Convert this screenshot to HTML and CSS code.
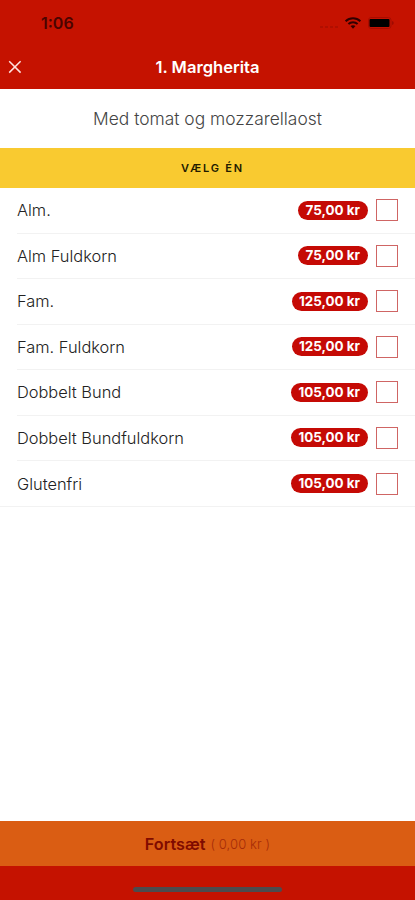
FILE: index.html
```html
<!DOCTYPE html>
<html lang="da">
<head>
    <meta charset="UTF-8">
    <meta name="viewport" content="width=device-width, initial-scale=1.0">
    <title>1. Margherita</title>
    <link rel="stylesheet" href="styles.css">
</head>
<body>
    <div class="screen">
        <header class="header">
            <div class="status-bar">
                <span class="time">1:06</span>
                <div class="status-icons">
                    <span class="signal"><i></i><i></i><i></i><i></i></span>
                    <svg class="wifi" width="18" height="14" viewBox="0 0 18 14" fill="none" stroke="#300000" stroke-width="2">
                        <path d="M1.6 5.2C5.8 1.2 12.2 1.2 16.4 5.2"/>
                        <path d="M4.4 8C7 5.5 11 5.5 13.6 8"/>
                        <path d="M6.5 10.1C8 8.8 10 8.8 11.5 10.1L9 12.8Z" fill="#300000" stroke="none"/>
                    </svg>
                    <svg class="battery" width="27" height="12" viewBox="0 0 27 12">
                        <rect x="0.5" y="0.5" width="22.5" height="11" rx="2.5" fill="none" stroke="#a80c00"/>
                        <rect x="1.5" y="2" width="20" height="8" rx="1" fill="#000"/>
                        <path d="M24.3 4C26 4.6 26 7.4 24.3 8Z" fill="#8f0800"/>
                    </svg>
                </div>
            </div>
            <div class="nav-bar">
                <button class="close" aria-label="Luk">
                    <svg width="14" height="14" viewBox="0 0 14 14" stroke="#ffe3e0" stroke-width="1.5">
                        <path d="M1.2 1.2L12.6 12.6M12.6 1.2L1.2 12.6"/>
                    </svg>
                </button>
                <h1>1. Margherita</h1>
            </div>
        </header>

        <p class="description">Med tomat og mozzarellaost</p>
        <h2 class="section-title">VÆLG ÉN</h2>

        <ul class="options">
            <li class="option"><span class="name">Alm.</span><span class="price">75,00 kr</span><span class="checkbox"></span></li>
            <li class="option"><span class="name">Alm Fuldkorn</span><span class="price">75,00 kr</span><span class="checkbox"></span></li>
            <li class="option"><span class="name">Fam.</span><span class="price">125,00 kr</span><span class="checkbox"></span></li>
            <li class="option"><span class="name">Fam. Fuldkorn</span><span class="price">125,00 kr</span><span class="checkbox"></span></li>
            <li class="option"><span class="name">Dobbelt Bund</span><span class="price">105,00 kr</span><span class="checkbox"></span></li>
            <li class="option"><span class="name">Dobbelt Bundfuldkorn</span><span class="price">105,00 kr</span><span class="checkbox"></span></li>
            <li class="option"><span class="name">Glutenfri</span><span class="price">105,00 kr</span><span class="checkbox"></span></li>
        </ul>

        <footer class="footer">
            <button class="continue"><strong>Fortsæt</strong><span class="total">( 0,00 kr )</span></button>
            <div class="home-area"><span class="home-indicator"></span></div>
        </footer>
    </div>
</body>
</html>
```
FILE: styles.css
```css
* {
    box-sizing: border-box;
}

body {
    margin: 0;
    font-family: 'Inter', sans-serif;
    background: #fff;
    color: #222;
}

h1, h2, p, ul {
    margin: 0;
    padding: 0;
}

button {
    border: none;
    padding: 0;
    font-family: inherit;
    background: none;
}

.screen {
    display: flex;
    flex-direction: column;
    height: 900px;
    overflow: hidden;
}

/* Header */
.header {
    height: 88.5px;
    flex-shrink: 0;
    background: #c51200;
}

.status-bar {
    display: flex;
    justify-content: space-between;
    align-items: center;
    height: 46px;
    padding: 0 20px 0 41px;
}

.time {
    font-size: 16px;
    font-weight: 600;
    color: #4a0400;
}

.status-icons {
    display: flex;
    align-items: center;
}

.signal {
    display: flex;
    gap: 2px;
    margin: 7px 6px 0 0;
}

.signal i {
    width: 3px;
    height: 2px;
    background: #b00f00;
}

.wifi {
    margin-right: 6px;
}

.nav-bar {
    display: grid;
    grid-template-columns: 30px 1fr 30px;
    align-items: center;
    height: 42px;
}

.close {
    display: flex;
    padding-left: 8px;
}

h1 {
    font-size: 16.6px;
    font-weight: 600;
    text-align: center;
    color: #fff;
}

/* Product */
.description {
    height: 59px;
    flex-shrink: 0;
    line-height: 60px;
    font-size: 17.4px;
    font-weight: 300;
    text-align: center;
    color: #444;
}

.section-title {
    height: 40px;
    flex-shrink: 0;
    line-height: 41px;
    padding-left: 10px;
    font-size: 11px;
    font-weight: 600;
    letter-spacing: 1.8px;
    text-align: center;
    background: #f9ca30;
    color: #211a00;
}

.options {
    list-style: none;
    border-bottom: 1px solid #f2f2f2;
}

.option {
    display: flex;
    align-items: center;
    height: 45.5px;
    margin-left: 17px;
    padding-right: 17px;
    border-bottom: 1px solid #f2f2f2;
}

.option:first-child {
    height: 46px;
}

.option:last-child {
    height: 45px;
    border-bottom: none;
}

.name {
    flex: 1;
    font-size: 16.4px;
    font-weight: 300;
}

.price {
    height: 19px;
    line-height: 19px;
    padding: 0 8px 0 7.5px;
    border-radius: 10px;
    font-size: 13.4px;
    font-weight: 700;
    background: #c50a05;
    color: #fff;
}

.checkbox {
    width: 22px;
    height: 22px;
    margin-left: 8px;
    border: 1px solid #cf6564;
}

/* Footer */
.footer {
    margin-top: auto;
    background: #c51200;
}

.continue {
    display: flex;
    justify-content: center;
    align-items: center;
    gap: 5px;
    width: 100%;
    height: 45px;
    background: #da5d13;
    color: #800b00;
}

.continue strong {
    font-size: 16.2px;
    font-weight: 600;
}

.total {
    font-size: 13px;
    font-weight: 300;
    letter-spacing: 0.1px;
    color: #a52b08;
}

.home-area {
    display: flex;
    justify-content: center;
    height: 34px;
    padding-top: 21px;
}

.home-indicator {
    width: 149px;
    height: 5px;
    border-radius: 3px;
    background: #4c4b4e;
}
```
